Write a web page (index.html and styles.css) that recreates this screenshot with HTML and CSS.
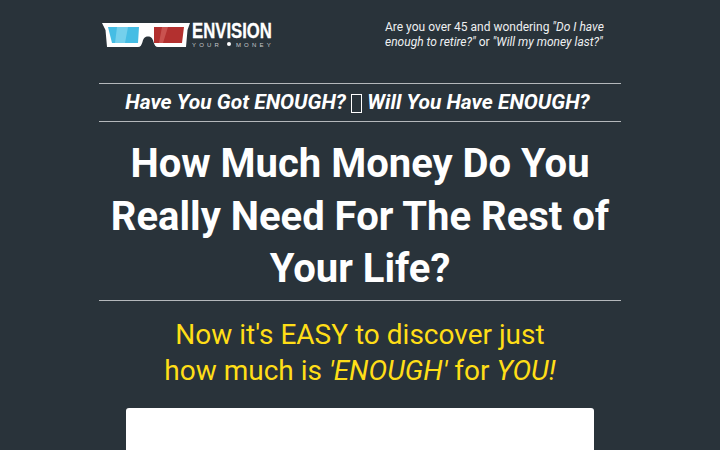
FILE: index.html
```html
<!DOCTYPE html>
<html lang="en">
<head>
<meta charset="utf-8">
<title>Envision Your Money</title>
<link rel="stylesheet" href="styles.css">
</head>
<body>
<div class="page">
  <header class="top">
    <div class="logo">
      <svg class="glasses" width="88" height="26" viewBox="0 0 88 26">
        <path class="frame" d="M0 1H88L85.500 8L84 25H56C53.500 25 52.500 23 51.500 20C50.500 16 49 14.500 46 14.500C43 14.500 41.500 16 40.500 20C39.500 23 38.500 25 36 25H5L3.500 8Z"/>
        <path class="lens-blue" d="M6 5H37L36 21H10Z"/>
        <path class="lens-blue-hi" d="M15 5H26L23 21H13Z"/>
        <path class="lens-red" d="M52 5H82L80 21H52Z"/>
        <path class="lens-red-hi" d="M60 5H66L61 21H57Z"/>
      </svg>
      <div class="brand">
        <div class="brand-name">ENVISION</div>
        <div class="brand-sub">YOUR <i class="dot"></i> MONEY</div>
      </div>
    </div>
    <p class="tagline">Are you over 45 and wondering <em>"Do I have enough to retire?"</em> or <em>"Will my money last?"</em></p>
  </header>
  <h2 class="kicker">Have You Got ENOUGH? <span class="tofu"></span> Will You Have ENOUGH?</h2>
  <h1 class="headline">How Much Money Do You Really Need For The Rest of Your Life?</h1>
  <p class="sub">Now it's EASY to discover just<br>how much is <em>'ENOUGH'</em> for <em>YOU!</em></p>
  <div class="card"></div>
</div>
</body>
</html>
```
FILE: styles.css
```css
html, body {
  margin: 0;
  height: 450px;
  overflow: hidden;
  background: #29333a;
}
.page {
  width: 522px;
  margin: 0 auto;
  font-family: Roboto, "Liberation Sans", sans-serif;
  color: #fff;
}
.top {
  display: flex;
  justify-content: space-between;
  height: 83px;
  box-sizing: border-box;
  padding: 20px 17px 0 3px;
}
.logo {
  display: flex;
  align-items: flex-start;
  gap: 2px;
  height: 32px;
}
.glasses { margin-top: 2px; }
.frame { fill: #fff; }
.lens-blue { fill: #45bde4; }
.lens-blue-hi { fill: #74d0ec; }
.lens-red { fill: #b3302f; }
.lens-red-hi { fill: #c9524f; }
.brand { width: 80px; }
.brand-name {
  font-family: "Liberation Sans", sans-serif;
  font-weight: 700;
  font-size: 22px;
  line-height: 21px;
  white-space: nowrap;
  -webkit-text-stroke: 0.3px #fff;
  transform: scaleX(0.76);
  transform-origin: left center;
}
.brand-sub {
  font-family: "Liberation Sans", sans-serif;
  font-size: 6px;
  line-height: 8px;
  letter-spacing: 3.2px;
  color: #c4c8ca;
  white-space: nowrap;
}
.dot {
  display: inline-block;
  width: 4px;
  height: 4px;
  border-radius: 50%;
  background: #fff;
  vertical-align: 1px;
}
.tagline {
  margin: 0;
  width: 219px;
  font-size: 12px;
  line-height: 15px;
  color: #eef0f1;
}
.kicker {
  margin: 0;
  height: 39px;
  box-sizing: border-box;
  padding-right: 5px;
  border-top: 1px solid #b4b8bb;
  border-bottom: 1px solid #b4b8bb;
  text-align: center;
  font-size: 21px;
  line-height: 37px;
  font-style: italic;
  font-weight: 700;
}
.tofu {
  display: inline-block;
  width: 9px;
  height: 17px;
  border: 1px solid #fff;
  vertical-align: -4px;
}
.headline {
  margin: 0;
  padding: 16px 0 4px;
  border-bottom: 1px solid #b4b8bb;
  text-align: center;
  font-size: 40px;
  line-height: 52.5px;
  font-weight: 700;
}
.sub {
  margin: 0;
  padding-top: 16px;
  text-align: center;
  font-size: 28px;
  line-height: 36px;
  color: #ffde17;
}
.card {
  width: 468px;
  height: 42px;
  margin: 19px auto 0;
  background: #fff;
  border-radius: 3px 3px 0 0;
}
```
